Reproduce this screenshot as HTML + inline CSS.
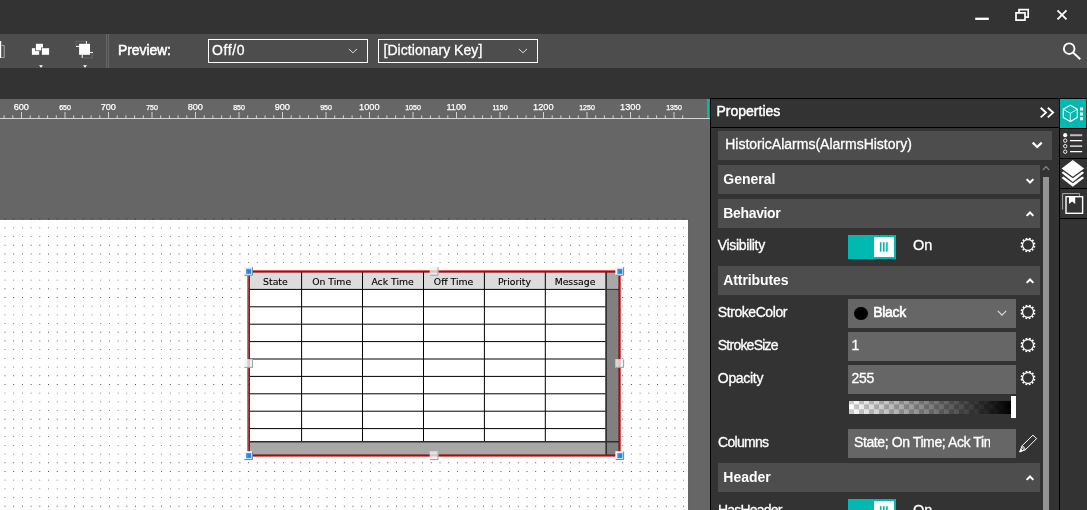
<!DOCTYPE html>
<html><head><meta charset="utf-8"><title>Editor</title>
<style>
*{box-sizing:border-box;margin:0;padding:0}
html{background:#333}body{will-change:transform;}html,body{width:1087px;height:510px;overflow:hidden;font-family:"Liberation Sans",sans-serif;color:#fff}
.abs{position:absolute}
#title{left:0;top:0;width:1087px;height:34px;background:#333}
#toolbar{left:0;top:34px;width:1087px;height:34px;background:#4d4d4d}
#stage{left:0;top:99px;width:710px;height:411px}
.dd{border:1px solid #fff;height:24px;top:5px;font-size:15px;line-height:22px;padding-left:4px}
#panel{left:710px;top:98px;width:350px;height:412px;background:#333;border-left:1px solid #000;border-right:1px solid #000;border-top:1px solid #000}
#phead{left:0;top:0;width:348px;height:29px;border-bottom:1px solid #000}
.box{background:#4d4d4d;height:29px;left:7px;width:322px}
.box b{position:absolute;left:6px;top:0;line-height:28px;font-size:15px;font-weight:bold;white-space:nowrap}
.lab{left:7px;font-size:14px;line-height:18px;white-space:nowrap}
.fld{left:137px;width:168px;height:29px;background:#666;font-size:14px;line-height:28px;padding-left:4px;white-space:nowrap;overflow:hidden}
.tog{width:48px;height:24px;background:#00bab1}
.tog i{position:absolute;left:26px;top:2px;width:20px;height:20px;background:#fff}
.tog u{position:absolute;top:8px;width:1.4px;height:8px;background:#00bab1}
#strip{left:1060px;top:98px;width:27px;height:412px;background:#333}
.cell{left:0;width:27px;height:30px;border-top:1px solid #000}
svg{position:absolute;overflow:visible}
</style></head><body>

<div class="abs" id="title">
<svg style="left:970px;top:0" width="117" height="34" viewBox="970 0 117 34" fill="none" stroke="#fff">
<path d="M975.2 18.8H988.8" stroke-width="2.3"/>
<path d="M1016 12.8H1025V20.2H1016Z M1019 12.5V9.7H1028.2V17.2H1025.3" stroke-width="1.7"/>
<path d="M1057.5 10.3L1066.5 19.3M1066.5 10.3L1057.5 19.3" stroke-width="1.8"/>
</svg></div>
<div class="abs" id="toolbar">
<svg style="left:0;top:0" width="120" height="34" viewBox="0 34 120 34">
<rect x="0" y="41" width="1.2" height="17" fill="#fff"/><path d="M1.5 45.5H4.2V57.5H1.5" fill="none" stroke="#bbb" stroke-width="0.8"/>
<rect x="31.9" y="48.2" width="7.3" height="6.6" fill="#fff"/><rect x="35.2" y="43.1" width="8.5" height="8" fill="#4d4d4d"/><rect x="35.9" y="43.8" width="7.1" height="6.6" fill="#fff"/><rect x="41.2" y="47.5" width="8" height="7.3" fill="#4d4d4d"/><rect x="41.9" y="48.2" width="7.2" height="6.6" fill="#fff"/>
<path d="M39 65.2H43L41 67.8Z" fill="#fff"/>
<path d="M75.9 46V41.3H86" fill="none" stroke="#666" stroke-width="1"/><path d="M82.2 58H92.4V52.6" fill="none" stroke="#666" stroke-width="1"/>
<rect x="79.1" y="43.8" width="10.9" height="11" fill="#fff"/>
<path d="M86.4 41V44M76 46.4H79.5M90 52.4H93M82.2 54.5V58" fill="none" stroke="#fff" stroke-width="1"/>
<path d="M83 65.2H87L85 67.8Z" fill="#fff"/>
<path d="M106.5 34V68M108.5 34V68" stroke="#676767" stroke-width="1"/>
</svg>
<div class="abs dd" style="left:208px;width:160px"></div>
<div class="abs dd" style="left:378px;width:160px"></div>
<span class="abs" style="left:118px;top:6px;font-size:14px;line-height:20px;white-space:nowrap;letter-spacing:-0.1px;-webkit-text-stroke:0.5px #fff;">Preview:</span>
<span class="abs" style="left:212px;top:6.1px;font-size:14px;line-height:20px;white-space:nowrap;-webkit-text-stroke:0.3px #fff;letter-spacing:0.6px;">Off/0</span>
<span class="abs" style="left:383.5px;top:6.1px;font-size:14px;line-height:20px;white-space:nowrap;-webkit-text-stroke:0.3px #fff;letter-spacing:0.05px;">[Dictionary Key]</span>
<svg style="left:340px;top:0" width="200" height="34" viewBox="340 34 200 34" fill="none" stroke="#ddd" stroke-width="1"><path d="M348.9 49L352.9 52.8L357 49M518.9 49L522.9 52.8L527 49"/></svg>
<svg style="left:1055px;top:0" width="32" height="34" viewBox="1055 34 32 34" fill="none" stroke="#fff" stroke-width="1.9"><circle cx="1069.2" cy="48.7" r="5.3"/><path d="M1073 52.5L1080.3 59.3"/></svg>
</div>
<svg class="abs" id="stage" style="left:0;top:99px" width="710" height="411" viewBox="0 99 710 411">
<defs><path id="dotrow" d="M4.57 0h.87v.87h-.87zM13.27 0h.87v.87h-.87zM21.97 0h.87v.87h-.87zM30.67 0h.87v.87h-.87zM39.37 0h.87v.87h-.87zM48.07 0h.87v.87h-.87zM56.77 0h.87v.87h-.87zM65.47 0h.87v.87h-.87zM74.17 0h.87v.87h-.87zM82.87 0h.87v.87h-.87zM91.57 0h.87v.87h-.87zM100.27 0h.87v.87h-.87zM108.97 0h.87v.87h-.87zM117.67 0h.87v.87h-.87zM126.37 0h.87v.87h-.87zM135.07 0h.87v.87h-.87zM143.77 0h.87v.87h-.87zM152.47 0h.87v.87h-.87zM161.17 0h.87v.87h-.87zM169.87 0h.87v.87h-.87zM178.57 0h.87v.87h-.87zM187.27 0h.87v.87h-.87zM195.97 0h.87v.87h-.87zM204.67 0h.87v.87h-.87zM213.37 0h.87v.87h-.87zM222.07 0h.87v.87h-.87zM230.77 0h.87v.87h-.87zM239.47 0h.87v.87h-.87zM248.17 0h.87v.87h-.87zM256.87 0h.87v.87h-.87zM265.57 0h.87v.87h-.87zM274.27 0h.87v.87h-.87zM282.97 0h.87v.87h-.87zM291.67 0h.87v.87h-.87zM300.37 0h.87v.87h-.87zM309.07 0h.87v.87h-.87zM317.77 0h.87v.87h-.87zM326.47 0h.87v.87h-.87zM335.17 0h.87v.87h-.87zM343.87 0h.87v.87h-.87zM352.57 0h.87v.87h-.87zM361.27 0h.87v.87h-.87zM369.97 0h.87v.87h-.87zM378.67 0h.87v.87h-.87zM387.37 0h.87v.87h-.87zM396.07 0h.87v.87h-.87zM404.77 0h.87v.87h-.87zM413.47 0h.87v.87h-.87zM422.17 0h.87v.87h-.87zM430.87 0h.87v.87h-.87zM439.57 0h.87v.87h-.87zM448.27 0h.87v.87h-.87zM456.97 0h.87v.87h-.87zM465.67 0h.87v.87h-.87zM474.37 0h.87v.87h-.87zM483.07 0h.87v.87h-.87zM491.77 0h.87v.87h-.87zM500.47 0h.87v.87h-.87zM509.17 0h.87v.87h-.87zM517.87 0h.87v.87h-.87zM526.57 0h.87v.87h-.87zM535.27 0h.87v.87h-.87zM543.97 0h.87v.87h-.87zM552.67 0h.87v.87h-.87zM561.37 0h.87v.87h-.87zM570.07 0h.87v.87h-.87zM578.77 0h.87v.87h-.87zM587.47 0h.87v.87h-.87zM596.17 0h.87v.87h-.87zM604.87 0h.87v.87h-.87zM613.57 0h.87v.87h-.87zM622.27 0h.87v.87h-.87zM630.97 0h.87v.87h-.87zM639.67 0h.87v.87h-.87zM648.37 0h.87v.87h-.87zM657.07 0h.87v.87h-.87zM665.77 0h.87v.87h-.87zM674.47 0h.87v.87h-.87zM683.17 0h.87v.87h-.87z"/><clipPath id="cc"><rect x="0" y="219.8" width="688.2" height="300"/></clipPath></defs>
<rect x="0" y="99" width="710" height="411" fill="#666"/>
<rect x="0" y="118" width="710" height="1" fill="#d4d4d4"/>
<path d="M4.1 115.3V118.5M12.8 115.3V118.5M21.5 112V118.5M30.2 115.3V118.5M38.9 115.3V118.5M47.6 115.3V118.5M56.3 115.3V118.5M65 112V118.5M73.7 115.3V118.5M82.4 115.3V118.5M91.1 115.3V118.5M99.8 115.3V118.5M108.5 112V118.5M117.2 115.3V118.5M125.9 115.3V118.5M134.6 115.3V118.5M143.3 115.3V118.5M152 112V118.5M160.7 115.3V118.5M169.4 115.3V118.5M178.1 115.3V118.5M186.8 115.3V118.5M195.5 112V118.5M204.2 115.3V118.5M212.9 115.3V118.5M221.6 115.3V118.5M230.3 115.3V118.5M239 112V118.5M247.7 115.3V118.5M256.4 115.3V118.5M265.1 115.3V118.5M273.8 115.3V118.5M282.5 112V118.5M291.2 115.3V118.5M299.9 115.3V118.5M308.6 115.3V118.5M317.3 115.3V118.5M326 112V118.5M334.7 115.3V118.5M343.4 115.3V118.5M352.1 115.3V118.5M360.8 115.3V118.5M369.5 112V118.5M378.2 115.3V118.5M386.9 115.3V118.5M395.6 115.3V118.5M404.3 115.3V118.5M413 112V118.5M421.7 115.3V118.5M430.4 115.3V118.5M439.1 115.3V118.5M447.8 115.3V118.5M456.5 112V118.5M465.2 115.3V118.5M473.9 115.3V118.5M482.6 115.3V118.5M491.3 115.3V118.5M500 112V118.5M508.7 115.3V118.5M517.4 115.3V118.5M526.1 115.3V118.5M534.8 115.3V118.5M543.5 112V118.5M552.2 115.3V118.5M560.9 115.3V118.5M569.6 115.3V118.5M578.3 115.3V118.5M587 112V118.5M595.7 115.3V118.5M604.4 115.3V118.5M613.1 115.3V118.5M621.8 115.3V118.5M630.5 112V118.5M639.2 115.3V118.5M647.9 115.3V118.5M656.6 115.3V118.5M665.3 115.3V118.5M674 112V118.5M682.7 115.3V118.5" stroke="#d2d2d2" stroke-width="1" fill="none"/>
<g fill="#fff" stroke="#fff" stroke-width="0.25" text-anchor="middle" font-family="Liberation Sans, sans-serif">
<text x="21.3" y="109.6" font-size="9.2">600</text>
<text x="65" y="109.8" font-size="7">650</text>
<text x="108.3" y="109.6" font-size="9.2">700</text>
<text x="152" y="109.8" font-size="7">750</text>
<text x="195.3" y="109.6" font-size="9.2">800</text>
<text x="239" y="109.8" font-size="7">850</text>
<text x="282.3" y="109.6" font-size="9.2">900</text>
<text x="326" y="109.8" font-size="7">950</text>
<text x="369.3" y="109.6" font-size="9.2">1000</text>
<text x="413" y="109.8" font-size="7">1050</text>
<text x="456.3" y="109.6" font-size="9.2">1100</text>
<text x="500" y="109.8" font-size="7">1150</text>
<text x="543.3" y="109.6" font-size="9.2">1200</text>
<text x="587" y="109.8" font-size="7">1250</text>
<text x="630.3" y="109.6" font-size="9.2">1300</text>
<text x="674" y="109.8" font-size="7">1350</text>
</g>
<rect x="707" y="99" width="2.4" height="19" fill="#00bab1"/>
<rect x="-5" y="219.35" width="693.6" height="300" fill="#fff" stroke="#555" stroke-width="0.9"/>
<g fill="#000" opacity="0.75">
<use href="#dotrow" y="218.75"/>
<use href="#dotrow" y="227.45"/>
<use href="#dotrow" y="236.15"/>
<use href="#dotrow" y="244.85"/>
<use href="#dotrow" y="253.55"/>
<use href="#dotrow" y="262.25"/>
<use href="#dotrow" y="270.95"/>
<use href="#dotrow" y="279.65"/>
<use href="#dotrow" y="288.35"/>
<use href="#dotrow" y="297.05"/>
<use href="#dotrow" y="305.75"/>
<use href="#dotrow" y="314.45"/>
<use href="#dotrow" y="323.15"/>
<use href="#dotrow" y="331.85"/>
<use href="#dotrow" y="340.55"/>
<use href="#dotrow" y="349.25"/>
<use href="#dotrow" y="357.95"/>
<use href="#dotrow" y="366.65"/>
<use href="#dotrow" y="375.35"/>
<use href="#dotrow" y="384.05"/>
<use href="#dotrow" y="392.75"/>
<use href="#dotrow" y="401.45"/>
<use href="#dotrow" y="410.15"/>
<use href="#dotrow" y="418.85"/>
<use href="#dotrow" y="427.55"/>
<use href="#dotrow" y="436.25"/>
<use href="#dotrow" y="444.95"/>
<use href="#dotrow" y="453.65"/>
<use href="#dotrow" y="462.35"/>
<use href="#dotrow" y="471.05"/>
<use href="#dotrow" y="479.75"/>
<use href="#dotrow" y="488.45"/>
<use href="#dotrow" y="497.15"/>
<use href="#dotrow" y="505.85"/>
</g>
<rect x="249" y="271.65" width="370.4" height="183.75" fill="#fff"/>
<rect x="249" y="271.65" width="356.5" height="17.75" fill="#dcdcdc"/>
<rect x="605.5" y="271.65" width="13.9" height="183.75" fill="#808080"/>
<rect x="605.5" y="271.65" width="13.9" height="17.75" fill="#a8a8a8"/>
<rect x="249" y="441.75" width="356.5" height="13.65" fill="#a8a8a8"/>
<path d="M249 289.4H605.5M249 306.8H605.5M249 324.2H605.5M249 341.6H605.5M249 359H605.5M249 376.4H605.5M249 393.8H605.5M249 411.2H605.5M249 428.6H605.5" stroke="#000" stroke-width="1" fill="none"/>
<path d="M301.6 271.65V441.75M362.5 271.65V441.75M423.5 271.65V441.75M484.4 271.65V441.75M545.3 271.65V441.75" stroke="#000" stroke-width="1" fill="none"/>
<path d="M606.15 271.65V455.4" stroke="#2e2e2e" stroke-width="1.6" fill="none"/>
<path d="M249 441.75H619.4" stroke="#2e2e2e" stroke-width="1.3" fill="none"/>
<path d="M606 289.4H619.4" stroke="#2e2e2e" stroke-width="1" fill="none"/>
<g font-family="DejaVu Sans, sans-serif" font-size="9.3" fill="#000" stroke="#000" stroke-width="0.12" text-anchor="middle">
<text x="275.4" y="284.7">State</text>
<text x="331.65" y="284.7">On Time</text>
<text x="392.6" y="284.7">Ack Time</text>
<text x="453.55" y="284.7">Off Time</text>
<text x="514.45" y="284.7">Priority</text>
<text x="575" y="284.7">Message</text>
</g>
<rect x="247.65" y="270.65" width="372.7" height="185.6" fill="none" stroke="#f06464" stroke-width="1.3"/>
<rect x="249.12" y="271.77" width="370.15" height="183.5" fill="none" stroke="#8a1a1a" stroke-width="1.75"/>
<rect x="244.1" y="266.93" width="8.8" height="8.8" fill="#f2f6fa"/>
<path d="M244.4 275.23H252.4V267.23" fill="none" stroke="#6f7f90" stroke-width="1"/>
<rect x="246.1" y="268.73" width="5.2" height="5.2" fill="#2f9bff"/>
<rect x="247.7" y="270.12" width="3" height="3" fill="#2383e6"/>
<rect x="615.3" y="266.93" width="8.8" height="8.8" fill="#f2f6fa"/>
<path d="M615.6 275.23H623.6V267.23" fill="none" stroke="#6f7f90" stroke-width="1"/>
<rect x="617.3" y="268.73" width="5.2" height="5.2" fill="#2f9bff"/>
<rect x="618.9" y="270.12" width="3" height="3" fill="#2383e6"/>
<rect x="244.1" y="451.25" width="8.8" height="8.8" fill="#f2f6fa"/>
<path d="M244.4 459.55H252.4V451.55" fill="none" stroke="#6f7f90" stroke-width="1"/>
<rect x="246.1" y="453.05" width="5.2" height="5.2" fill="#2f9bff"/>
<rect x="247.7" y="454.45" width="3" height="3" fill="#2383e6"/>
<rect x="615.3" y="451.25" width="8.8" height="8.8" fill="#f2f6fa"/>
<path d="M615.6 459.55H623.6V451.55" fill="none" stroke="#6f7f90" stroke-width="1"/>
<rect x="617.3" y="453.05" width="5.2" height="5.2" fill="#2f9bff"/>
<rect x="618.9" y="454.45" width="3" height="3" fill="#2383e6"/>
<rect x="429.7" y="266.93" width="8.8" height="8.8" fill="#eef2f3" fill-opacity="0.78"/>
<path d="M430 275.23H438V267.23" fill="none" stroke="#9a9fa3" stroke-width="1"/>
<rect x="429.7" y="451.25" width="8.8" height="8.8" fill="#eef2f3" fill-opacity="0.78"/>
<path d="M430 459.55H438V451.55" fill="none" stroke="#9a9fa3" stroke-width="1"/>
<rect x="244.1" y="359.09" width="8.8" height="8.8" fill="#eef2f3" fill-opacity="0.78"/>
<path d="M244.4 367.39H252.4V359.39" fill="none" stroke="#9a9fa3" stroke-width="1"/>
<rect x="615.3" y="359.09" width="8.8" height="8.8" fill="#eef2f3" fill-opacity="0.78"/>
<path d="M615.6 367.39H623.6V359.39" fill="none" stroke="#9a9fa3" stroke-width="1"/>
</svg>
<div class="abs" id="panel"></div>
<div class="abs" id="pwrap" style="left:0;top:0;width:1087px;height:510px">
<div class="abs" style="left:711px;top:127px;width:348px;height:1px;background:#000"></div>
<span class="abs" style="left:716.5px;top:101px;font-size:14px;line-height:20px;white-space:nowrap;-webkit-text-stroke:0.45px #fff;">Properties</span>
<svg style="left:1039px;top:106px" width="16" height="13" viewBox="1039 106 16 13" fill="none" stroke="#fff" stroke-width="1.9"><path d="M1040.7 107.8L1046 112.6L1040.7 117.4M1047.8 107.8L1053.1 112.6L1047.8 117.4"/></svg>
<div class="abs" style="left:718px;top:131px;width:334px;height:29px;background:#4d4d4d"></div>
<span class="abs" style="left:725.2px;top:133.8px;font-size:14px;line-height:20px;white-space:nowrap;-webkit-text-stroke:0.3px #fff;">HistoricAlarms(AlarmsHistory)</span>
<svg style="left:1031px;top:141px" width="12" height="9" viewBox="1031 141 12 9" fill="none" stroke="#fff" stroke-width="2.2"><path d="M1032.7 142.6L1037.2 147L1041.7 142.6"/></svg>
<div class="abs" style="left:718px;top:165px;width:322px;height:29px;background:#4d4d4d"></div>
<span class="abs" style="left:723.3px;top:168.8px;font-size:14px;line-height:20px;white-space:nowrap;font-weight:bold;">General</span>
<svg style="left:1022px;top:174.8px" width="16" height="12" viewBox="1022 174.8 16 12" fill="none" stroke="#fff" stroke-width="2"><path d="M1026.6 178.9 L1030 182.3 L1033.4 178.9"/></svg>
<div class="abs" style="left:718px;top:199px;width:322px;height:29px;background:#4d4d4d"></div>
<span class="abs" style="left:723.3px;top:202.8px;font-size:14px;line-height:20px;white-space:nowrap;font-weight:bold;letter-spacing:-0.35px;">Behavior</span>
<svg style="left:1022px;top:208.3px" width="16" height="12" viewBox="1022 208.3 16 12" fill="none" stroke="#fff" stroke-width="2"><path d="M1026.6 216.2 L1030 212.8 L1033.4 216.2"/></svg>
<span class="abs" style="left:717.8px;top:235px;font-size:14px;line-height:20px;white-space:nowrap;-webkit-text-stroke:0.3px #fff;letter-spacing:-0.33px;">Visibility</span>
<div class="abs tog" style="left:848px;top:235px"><i></i><svg style="left:30px;top:6px" width="12" height="12" viewBox="30 6 12 12" fill="#00bab1"><rect x="31.9" y="7.2" width="1.6" height="9.5"/><rect x="35" y="7.2" width="1.6" height="9.5"/><rect x="38.1" y="7.2" width="1.6" height="9.5"/></svg></div>
<span class="abs" style="left:913px;top:235px;font-size:14.5px;line-height:20px;white-space:nowrap;-webkit-text-stroke:0.3px #fff;">On</span>
<svg style="left:1020px;top:237px" width="16" height="16" viewBox="-8 -8 16 16" fill="none" stroke="#fff"><circle r="5.5" stroke-width="1.3"/><circle r="6.6" stroke-width="1.6" stroke-dasharray="1.75 1.7056" transform="rotate(7.4)"/></svg>
<div class="abs" style="left:718px;top:266px;width:322px;height:29px;background:#4d4d4d"></div>
<span class="abs" style="left:723.3px;top:269.8px;font-size:14px;line-height:20px;white-space:nowrap;font-weight:bold;letter-spacing:-0.1px;">Attributes</span>
<svg style="left:1022px;top:275.3px" width="16" height="12" viewBox="1022 275.3 16 12" fill="none" stroke="#fff" stroke-width="2"><path d="M1026.6 283.2 L1030 279.8 L1033.4 283.2"/></svg>
<span class="abs" style="left:717.8px;top:302px;font-size:14px;line-height:20px;white-space:nowrap;-webkit-text-stroke:0.3px #fff;letter-spacing:-0.43px;">StrokeColor</span>
<div class="abs" style="left:848px;top:299px;width:168px;height:29px;background:#666"></div>
<span class="abs" style="left:853.9px;top:306.5px;width:13.8px;height:13.8px;border-radius:7px;background:#000"></span>
<span class="abs" style="left:873.3px;top:302px;font-size:14px;line-height:20px;white-space:nowrap;letter-spacing:-0.35px;-webkit-text-stroke:0.55px #fff;">Black</span>
<svg style="left:997px;top:310px" width="10" height="7" viewBox="0 0 10 7" fill="none" stroke="#ddd" stroke-width="1.1"><path d="M0.8 0.8L5 5.2L9.2 0.8"/></svg>
<svg style="left:1020px;top:304px" width="16" height="16" viewBox="-8 -8 16 16" fill="none" stroke="#fff"><circle r="5.5" stroke-width="1.3"/><circle r="6.6" stroke-width="1.6" stroke-dasharray="1.75 1.7056" transform="rotate(7.4)"/></svg>
<span class="abs" style="left:717.8px;top:335px;font-size:14px;line-height:20px;white-space:nowrap;-webkit-text-stroke:0.3px #fff;letter-spacing:-0.77px;">StrokeSize</span>
<div class="abs" style="left:848px;top:332px;width:168px;height:29px;background:#666"></div>
<span class="abs" style="left:851.5px;top:335px;font-size:14px;line-height:20px;white-space:nowrap;-webkit-text-stroke:0.3px #fff;">1</span>
<svg style="left:1020px;top:337px" width="16" height="16" viewBox="-8 -8 16 16" fill="none" stroke="#fff"><circle r="5.5" stroke-width="1.3"/><circle r="6.6" stroke-width="1.6" stroke-dasharray="1.75 1.7056" transform="rotate(7.4)"/></svg>
<span class="abs" style="left:717.8px;top:368px;font-size:14px;line-height:20px;white-space:nowrap;-webkit-text-stroke:0.3px #fff;letter-spacing:-0.3px;">Opacity</span>
<div class="abs" style="left:848px;top:365px;width:168px;height:29px;background:#666"></div>
<span class="abs" style="left:851.5px;top:368px;font-size:14px;line-height:20px;white-space:nowrap;-webkit-text-stroke:0.3px #fff;letter-spacing:-0.25px;">255</span>
<svg style="left:1020px;top:370px" width="16" height="16" viewBox="-8 -8 16 16" fill="none" stroke="#fff"><circle r="5.5" stroke-width="1.3"/><circle r="6.6" stroke-width="1.6" stroke-dasharray="1.75 1.7056" transform="rotate(7.4)"/></svg>
<svg style="left:848px;top:395px" width="170" height="24" viewBox="848 395 170 24"><defs><pattern id="chk" patternUnits="userSpaceOnUse" x="849" y="399.3" width="10" height="10"><rect width="10" height="10" fill="#fff"/><rect width="5" height="5" fill="#ccc"/><rect x="5" y="5" width="5" height="5" fill="#ccc"/></pattern><linearGradient id="og" x1="0" x2="1" y1="0" y2="0"><stop offset="0" stop-color="#000" stop-opacity="0"/><stop offset="1" stop-color="#000" stop-opacity="1"/></linearGradient></defs><rect x="849" y="401" width="162" height="13" fill="url(#chk)"/><rect x="849" y="401" width="162" height="13" fill="url(#og)"/><rect x="1011" y="396" width="5" height="22" fill="#fff"/></svg>
<span class="abs" style="left:718px;top:431.8px;font-size:14px;line-height:20px;white-space:nowrap;-webkit-text-stroke:0.3px #fff;letter-spacing:-0.7px;">Columns</span>
<div class="abs" style="left:848px;top:429px;width:168px;height:29px;background:#666"></div>
<span class="abs" style="left:854px;top:432px;font-size:14px;line-height:20px;white-space:nowrap;-webkit-text-stroke:0.3px #fff;letter-spacing:-0.4px;width:136px;overflow:hidden;">State; On Time; Ack Time; Off Time; Priority; Message</span>
<svg style="left:1018px;top:433px" width="20" height="20" viewBox="1018 433 20 20" fill="none" stroke="#fff" stroke-width="1" stroke-linejoin="round"><path d="M1032.9 435.2L1036.6 438.6L1025.7 449.5L1022.3 445.5Z"/><path d="M1021.4 446.7L1024.7 450.5"/><path d="M1022.3 445.5L1019.8 451.9L1025.7 449.5"/><path d="M1020.9 448.8L1019.7 452L1022.8 450.8Z" fill="#fff" stroke="#fff" stroke-width="0.6"/></svg>
<div class="abs" style="left:718px;top:463px;width:322px;height:29px;background:#4d4d4d"></div>
<span class="abs" style="left:723.3px;top:466.8px;font-size:14px;line-height:20px;white-space:nowrap;font-weight:bold;">Header</span>
<svg style="left:1022px;top:472.3px" width="16" height="12" viewBox="1022 472.3 16 12" fill="none" stroke="#fff" stroke-width="2"><path d="M1026.6 480.2 L1030 476.8 L1033.4 480.2"/></svg>
<span class="abs" style="left:718px;top:499.5px;font-size:14px;line-height:20px;white-space:nowrap;-webkit-text-stroke:0.3px #fff;letter-spacing:-0.8px;">HasHeader</span>
<div class="abs tog" style="left:848px;top:499px"><i></i><svg style="left:30px;top:6px" width="12" height="12" viewBox="30 6 12 12" fill="#00bab1"><rect x="31.9" y="7.2" width="1.6" height="9.5"/><rect x="35" y="7.2" width="1.6" height="9.5"/><rect x="38.1" y="7.2" width="1.6" height="9.5"/></svg></div>
<span class="abs" style="left:913px;top:499.5px;font-size:14.5px;line-height:20px;white-space:nowrap;-webkit-text-stroke:0.3px #fff;">On</span>
<svg style="left:1042px;top:165px" width="8" height="6" viewBox="0 0 8 6" fill="none" stroke="#888" stroke-width="1.1"><path d="M0.8 5L4 1.6L7.2 5"/></svg>
<div class="abs" style="left:1043px;top:177px;width:6px;height:340px;background:#949494"></div>
</div>
<div class="abs" id="strip">
<div class="abs cell" style="top:0;background:#00bab1;border-top:1px solid #000;width:26px"><svg style="left:0;top:0" width="27" height="29" viewBox="1060 99 27 29" fill="none" stroke="#fff" stroke-width="1.2"><path d="M1070.3 105.2L1077.3 109.2V117.6L1070.3 121.6L1063.3 117.6V109.2Z " stroke-linejoin="round"/><path d="M1063.3 109.2L1070.3 113.3L1077.3 109.2M1070.3 113.3V121.6" stroke-width="0.8"/><path d="M1080 107.5h3v3h-3zM1080 112.4h3v3h-3zM1080 117.3h3v3h-3z" fill="#fff" stroke="none"/></svg></div>
<div class="abs cell" style="top:30px"><svg style="left:0;top:0" width="27" height="29" viewBox="1060 129 27 29" fill="none" stroke="#fff"><circle cx="1065.2" cy="135.2" r="2.1" fill="#fff" stroke="none"/><circle cx="1065.2" cy="140.6" r="1.7" stroke-width="0.9"/><circle cx="1065.2" cy="146.2" r="1.7" stroke-width="0.9"/><circle cx="1065.2" cy="151.7" r="1.7" stroke-width="0.9"/><path d="M1070 135.2H1082.2" stroke="#bbb" stroke-width="2"/><path d="M1070 140.6H1082.2M1070 146.2H1082.2M1070 151.7H1082.2" stroke-width="1.2"/></svg></div>
<div class="abs cell" style="top:60px"><svg style="left:0;top:0" width="27" height="29" viewBox="1060 159 27 29" fill="#fff" stroke="none"><path d="M1072.8 160.1L1084.1 168.4L1072.8 176.8L1061.6 168.4Z"/><path d="M1061.5 172.8L1063.4 171.4L1072.8 178.2L1082.2 171.4L1084.1 172.8L1072.8 182.1Z"/><path d="M1061.5 178L1063.4 176.6L1072.8 183.2L1082.2 176.6L1084.1 178L1072.8 186.8Z"/></svg></div>
<div class="abs cell" style="top:90px"><svg style="left:0;top:0" width="27" height="29" viewBox="1060 189 27 29" fill="none" stroke="#fff"><path d="M1062.6 209.5V193.6H1079.6V196" stroke="#aaa" stroke-width="1"/><rect x="1066" y="196.7" width="16.6" height="16.6" stroke-width="1.4"/><path d="M1069 196.7H1075.2V204L1072.1 201.4L1069 204Z" fill="#fff" stroke="none"/></svg></div>
<div class="abs cell" style="top:120px;height:1px"></div>
</div>
</body></html>
